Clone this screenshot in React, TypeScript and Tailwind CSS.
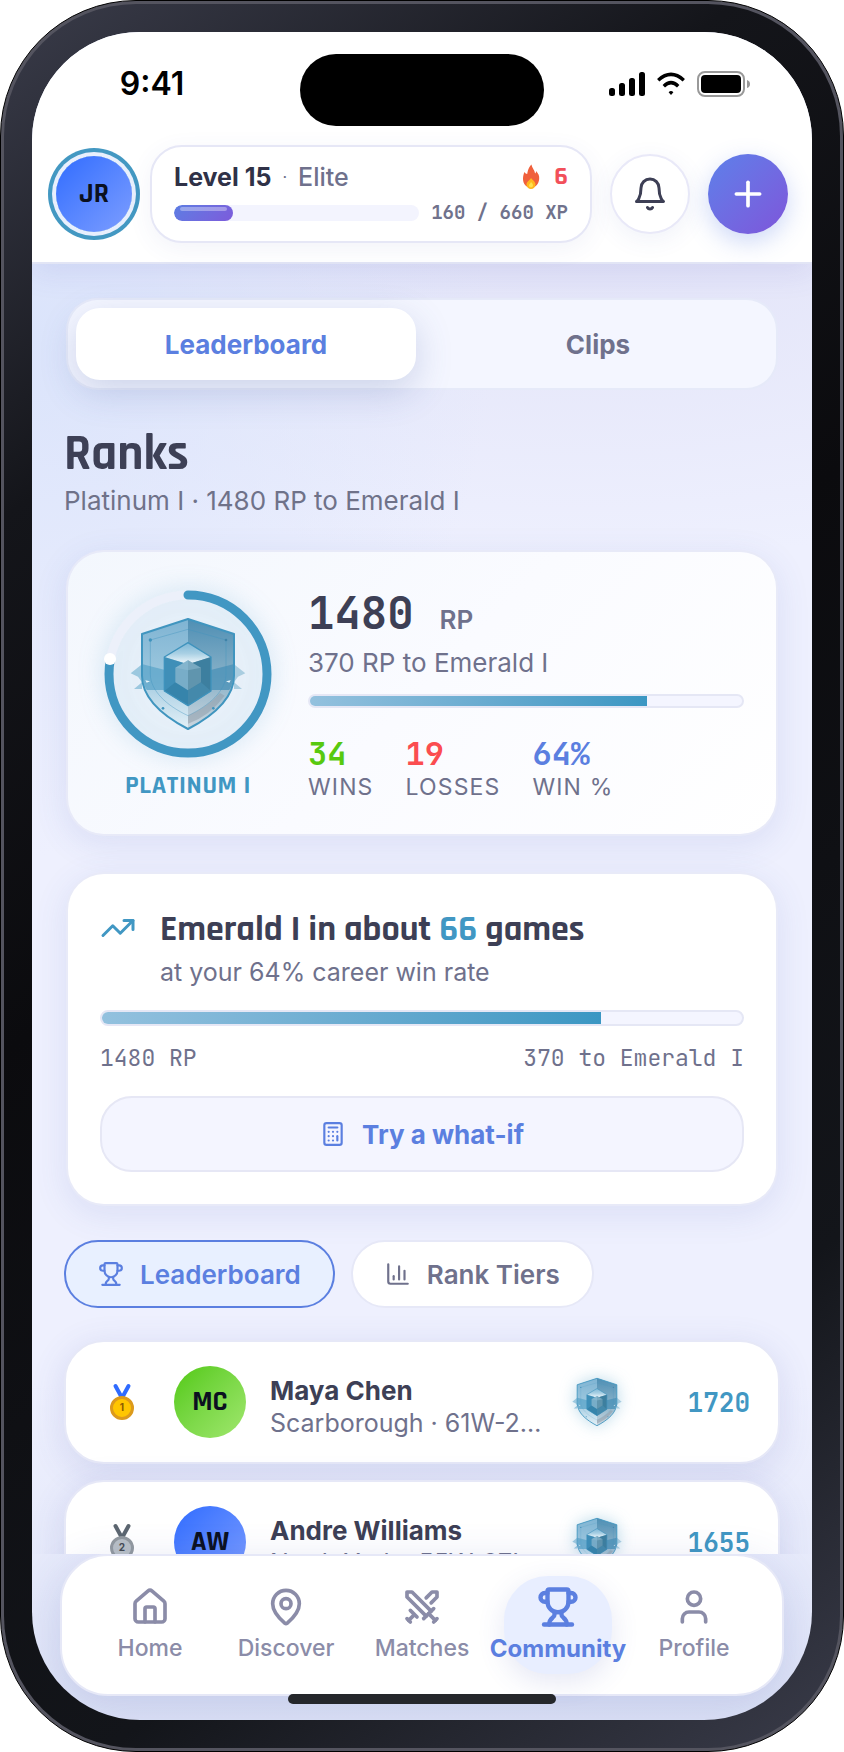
import { useId } from "react";
import {
  Calculator,
  ChartColumn,
  House,
  MapPin,
  Plus,
  Swords,
  TrendingUp,
  Trophy,
  User,
} from "lucide-react";

const DISPLAY = "font-['Rajdhani','Roboto',sans-serif]";
const MONO = "font-['JetBrains_Mono','DejaVu_Sans_Mono',monospace]";
const CARD =
  "mx-1 rounded-[36px] p-8 shadow-[0_0_0_2px_#e8eaf8,0_8px_32px_4px_rgba(70,85,175,0.10)]";

function Shield({ className }: { className: string }) {
  const id = useId();
  const left = `${id}l`;
  const right = `${id}r`;
  const top = `${id}t`;
  return (
    <svg viewBox="240 232 348 346" className={className} aria-hidden="true">
      <defs>
        <linearGradient id={left} x1="0" y1="0" x2="0" y2="1">
          <stop offset="0" stopColor="#7fb4d3" />
          <stop offset="0.5" stopColor="#9cc7de" />
          <stop offset="1" stopColor="#e3f0f7" />
        </linearGradient>
        <linearGradient id={right} x1="0" y1="0" x2="0" y2="1">
          <stop offset="0" stopColor="#4f8fb4" />
          <stop offset="0.5" stopColor="#84afc7" />
          <stop offset="1" stopColor="#ccd6de" />
        </linearGradient>
        <linearGradient id={top} x1="0" y1="0" x2="0" y2="1">
          <stop offset="0" stopColor="#7db7d6" />
          <stop offset="0.5" stopColor="#a9d0e4" />
          <stop offset="1" stopColor="#f4fafd" />
        </linearGradient>
      </defs>
      <path d="M242 403 276 376V450H252L276 430 264 413Z" fill="#9cc8df" />
      <path d="M586 403 552 376V450H576L552 430 564 413Z" fill="#a9cde0" />
      <path d="M414 240 276 285V410C276 480 338 530 414 570Z" fill={`url(#${left})`} />
      <path d="M414 240 552 285V410C552 480 490 530 414 570Z" fill={`url(#${right})`} />
      <path d="M278 376 345 393V453H290Q278 432 278 410Z" fill="#5fa6ca" opacity="0.8" />
      <path d="M550 376 482 393V453H538Q550 432 550 410Z" fill="#4c92b8" opacity="0.8" />
      <path
        d="M414 271 301 303V405C301 455 350 500 414 530 478 500 528 455 528 405V303Z"
        fill="none"
        stroke="#3f93bd"
        strokeWidth="2"
        opacity="0.6"
      />
      <path d="M414 530Q470 506 510 462L524 470Q480 530 414 554Z" fill="#8d9aa5" opacity="0.5" />
      <path d="M286 424 300 427 290 431ZM542 424 528 427 538 431Z" fill="#eaf5fa" />
      <circle cx="301" cy="303" r="5" fill="#3f93bd" />
      <circle cx="528" cy="303" r="4" fill="#3f83a8" />
      <circle cx="339" cy="508" r="4" fill="#3f93bd" />
      <circle cx="490" cy="508" r="4" fill="#3f93bd" />
      <path
        d="M414 240 552 285V410C552 480 490 530 414 570 338 530 276 480 276 410V285Z"
        fill="none"
        stroke="#4095bf"
        strokeWidth="6"
        strokeLinejoin="round"
      />
      <path d="M414 311 343 354 414 376 483 354Z" fill={`url(#${top})`} />
      <path d="M343 354 414 376V500L343 456Z" fill="#3f8fb8" />
      <path d="M483 354 414 376V500L483 456Z" fill="#3d7f9f" />
      <path d="M343 456 376 430 414 454V500Z" fill="#3684ab" />
      <path d="M483 456 453 430 414 454V500Z" fill="#4489ab" />
      <path d="M414 364 376 386V430L414 454Z" fill="#78adc8" />
      <path d="M414 364 453 386V430L414 454Z" fill="#6095ae" />
      <path d="M414 364 376 386 414 394 453 386Z" fill="#8fbdd3" opacity="0.5" />
      <path
        d="M414 311 483 354V456L414 500 343 456V354Z"
        fill="none"
        stroke="#3f93bd"
        strokeWidth="4"
        strokeLinejoin="round"
      />
    </svg>
  );
}

function BellIcon() {
  return (
    <svg
      viewBox="0 0 24 24"
      className="size-9"
      fill="none"
      stroke="currentColor"
      strokeWidth="2"
      strokeLinecap="round"
      strokeLinejoin="round"
      aria-hidden="true"
    >
      <path d="M6 8a6 6 0 0 1 12 0c0 7 3 9 3 9H3s3-2 3-9" />
      <path d="M10.300 21a1.940 1.940 0 0 0 3.400 0" />
    </svg>
  );
}

function Flame() {
  return (
    <svg viewBox="0 0 18 26" className="h-[26px] w-[18px]" aria-hidden="true">
      <path
        d="M9.500 0.500C10 4 13 6.500 13 9.500 14 9 14 8 14 7 16.500 9.500 17.500 12 17.200 15 16.800 20 13.500 23.500 9 23.500S1 20 1 15C1 12 1.600 10 2.500 8 3.200 9 4 10 5.200 10 6 6 6.500 3.500 9.500 0.500Z"
        fill="#f0603c"
      />
      <path
        d="M9 14C10 15.500 13.500 17.500 13.500 20.500 13.500 23 11.500 25 9 25S4.500 23 4.500 20.500C4.500 17.500 8 16 9 14Z"
        fill="#ffb61e"
      />
      <path d="M9 18C10 19 11 20 11 21.500A2 2 0 0 1 7 21.500C7 20 8.500 19.500 9 18Z" fill="#ffe14d" />
    </svg>
  );
}

function Medal({ place }: { place: number }) {
  const gold = place === 1;
  return (
    <svg viewBox="0 0 28 40" className="h-10 w-7" role="img" aria-label={`Place ${place}`}>
      <path
        d="M7.500 4 13.500 15M20.500 4 14.500 15"
        stroke={gold ? "#2f6bff" : "#5c6670"}
        strokeWidth="4"
        strokeLinecap="round"
      />
      <circle
        cx="14"
        cy="26"
        r="10.500"
        fill={gold ? "#ffc600" : "#b9c0c6"}
        stroke={gold ? "#dc9a1c" : "#92999f"}
        strokeWidth="3"
      />
      <text
        x="14"
        y="29"
        textAnchor="middle"
        fontSize="10"
        fontWeight="700"
        fill={gold ? "#8a5a00" : "#444b52"}
      >
        {place}
      </text>
    </svg>
  );
}

function StatusBar() {
  return (
    <div className="grid grid-cols-[1fr_244px_1fr] items-center pt-[22px]">
      <div className="pr-7 pb-3 text-center text-[32px] leading-10 font-semibold text-black">9:41</div>
      <div className="h-[72px] rounded-full bg-black" />
      <div className="flex items-center justify-center gap-3 pb-3 pl-1">
        <svg viewBox="0 0 36 24" className="h-6 w-9" aria-hidden="true">
          <rect x="0" y="16" width="6" height="8" rx="2.500" />
          <rect x="10" y="11" width="6" height="13" rx="2.500" />
          <rect x="20" y="6" width="6" height="18" rx="2.500" />
          <rect x="30" y="0" width="6" height="24" rx="2.500" />
        </svg>
        <svg viewBox="0 0 28 24" className="h-6 w-7" fill="none" stroke="#000" strokeWidth="3.400" aria-hidden="true">
          <path d="M1.200 8.200Q14-3.500 26.800 8.200" />
          <path d="M6.800 14.200Q14 7 21.200 14.200" />
          <path d="M11.600 20.200Q14 17.800 16.400 20.200L14 23Z" fill="#000" stroke="none" />
        </svg>
        <svg viewBox="0 0 54 26" className="h-[26px] w-[54px]" aria-hidden="true">
          <rect x="1" y="1" width="46" height="24" rx="7" fill="none" stroke="#999" strokeWidth="2" />
          <rect x="4" y="4" width="40" height="18" rx="4" />
          <path d="M50 9Q53 10 53 13T50 17Z" fill="#999" />
        </svg>
      </div>
    </div>
  );
}

function Header() {
  return (
    <header className="relative z-10 border-b-2 border-[#e2e5f5] bg-white shadow-[0_8px_28px_rgba(90,90,190,0.12)]">
      <StatusBar />
      <div className="flex items-center gap-[18px] px-6 py-[19px]">
        <button
          className={`flex size-[76px] shrink-0 items-center justify-center rounded-full bg-linear-135 from-[#2f6bff] to-[#7d9dff] text-[28px] font-bold text-[#0b1020] shadow-[0_0_0_4px_#e8effd,0_0_0_8px_#4398c2] ${DISPLAY}`}
        >
          JR
        </button>
        <div className="flex h-[98px] min-w-0 flex-1 flex-col justify-center gap-1.5 rounded-[32px] border-2 border-[#e6e7f6] bg-white px-[22px] shadow-[0_6px_24px_rgba(70,85,175,0.07)]">
          <div className="flex items-center justify-between">
            <div className="flex items-center gap-[11px] text-[25px] leading-8">
              <span className="font-bold text-[#2f3147]">Level 15</span>
              <span className="text-base text-[#6b6e88]">·</span>
              <span className="font-medium text-[#6f718c]">Elite</span>
            </div>
            <div className={`flex items-center gap-3.5 text-[26px] leading-8 font-bold text-[#f2505a] ${DISPLAY}`}>
              <Flame />6
            </div>
          </div>
          <div className="flex items-center gap-3">
            <div className="h-4 flex-1 overflow-hidden rounded-full bg-[#f3f4fe]">
              <div className="h-full w-[24%] rounded-full bg-linear-135 from-[#5b7de3] to-[#7c5bdb] px-1.5 pt-0.5">
                <div className="h-1 rounded-full bg-white/35" />
              </div>
            </div>
            <span className={`text-[19px] leading-7 font-semibold text-[#70728c] ${MONO}`}>160 / 660 XP</span>
          </div>
        </div>
        <button
          aria-label="Notifications"
          className="flex size-20 shrink-0 items-center justify-center rounded-full border-2 border-[#e9e9f8] bg-white text-[#3d3f55] shadow-[0_6px_24px_rgba(70,85,175,0.08)]"
        >
          <BellIcon />
        </button>
        <button
          aria-label="Add"
          className="flex size-20 shrink-0 items-center justify-center rounded-full bg-linear-135 from-[#5b80ea] to-[#7d55da] text-white shadow-[0_8px_24px_rgba(91,125,227,0.30)]"
        >
          <Plus className="size-10" strokeWidth={2.2} />
        </button>
      </div>
    </header>
  );
}

function ProgressBar({ height }: { height: string }) {
  return (
    <div className={`${height} overflow-hidden rounded-full border-2 border-[#e5e7f5] bg-[#f4f5ff]`}>
      <div className="h-full w-[78%] bg-linear-to-r from-[#93c1de] to-[#3b97c3]" />
    </div>
  );
}

function RankRing() {
  const length = 2 * Math.PI * 79;
  return (
    <svg viewBox="0 0 176 180" className="h-[180px] w-[176px] overflow-visible drop-shadow-[0_0_12px_rgba(67,152,194,0.25)]" aria-hidden="true">
      <circle cx="88" cy="90" r="79" fill="#e9f1fa" fillOpacity="0.4" stroke="#ecf0fa" strokeWidth="9" />
      <circle
        cx="88"
        cy="90"
        r="79"
        fill="none"
        stroke="#4197c3"
        strokeWidth="9"
        strokeLinecap="round"
        strokeDasharray={`${length * 0.78} ${length}`}
        transform="rotate(-90 88 90)"
      />
      <circle cx="10" cy="75" r="6" fill="#fff" />
    </svg>
  );
}

const stats = [
  { value: "34", label: "WINS", color: "text-[#58c90f]" },
  { value: "19", label: "LOSSES", color: "text-[#fb4d50]" },
  { value: "64%", label: "WIN %", color: "text-[#5b7fe0]" },
];

function RankCard() {
  return (
    <section
      className={`${CARD} flex gap-8 bg-[linear-gradient(135deg,#f3f7fd_0%,#fafbff_50%,#ffffff_100%)]`}
    >
      <div className="flex flex-col items-center justify-between">
        <div className="grid place-items-center [&>*]:[grid-area:1/1]">
          <RankRing />
          <Shield className="relative h-[116px] w-[116px]" />
        </div>
        <div className={`text-[26px] leading-8 font-bold tracking-wide text-[#4197c3] ${DISPLAY}`}>PLATINUM I</div>
      </div>
      <div className="min-w-0 flex-1">
        <div className="flex h-[58px] items-baseline gap-[26px] leading-[58px]">
          <span className={`text-[44px] font-bold text-[#3d3f55] ${MONO}`}>1480</span>
          <span className="text-[26px] leading-8 font-semibold text-[#6f718c]">RP</span>
        </div>
        <p className="mb-2.5 text-[26px] leading-[42px] text-[#6f718c]">370 RP to Emerald I</p>
        <ProgressBar height="h-3.5" />
        <dl className="mt-7 flex gap-8">
          {stats.map((s) => (
            <div key={s.label} className="flex flex-col-reverse">
              <dt className="text-[23px] leading-[30px] tracking-wider text-[#6f718c]">{s.label}</dt>
              <dd className={`text-[32px] leading-9 font-bold ${MONO} ${s.color}`}>{s.value}</dd>
            </div>
          ))}
        </dl>
      </div>
    </section>
  );
}

function ForecastCard() {
  return (
    <section className={`${CARD} mt-10 bg-white`}>
      <div className="flex gap-6">
        <TrendingUp className="mt-1 size-9 shrink-0 text-[#4197c3]" strokeWidth={2} />
        <div>
          <h2 className={`text-[36px] leading-[48px] font-bold text-[#3d3f55] ${DISPLAY}`}>
            Emerald I in about <span className="text-[#4197c3]">66</span> games
          </h2>
          <p className="mb-5 text-[25px] leading-9 text-[#6f718c]">at your 64% career win rate</p>
        </div>
      </div>
      <ProgressBar height="h-4" />
      <div className={`mt-4 flex justify-between text-[23px] leading-8 text-[#6f718c] ${MONO}`}>
        <span>1480 RP</span>
        <span>370 to Emerald I</span>
      </div>
      <button className="mt-[22px] flex h-[76px] w-full items-center justify-center gap-4 rounded-[32px] border-2 border-[#e6e7f5] bg-[#f4f5ff] text-[26px] font-bold text-[#5b7fe0]">
        <Calculator className="size-[26px]" />
        Try a what-if
      </button>
    </section>
  );
}

const players = [
  { place: 1, initials: "MC", name: "Maya Chen", detail: "Scarborough · 61W-27L", rp: 1720, avatar: "from-[#51c904] to-[#a0e76c]" },
  { place: 2, initials: "AW", name: "Andre Williams", detail: "North York · 55W-27L", rp: 1655, avatar: "from-[#2f6bff] to-[#7d9dff]" },
];

function Leaderboard() {
  return (
    <ol className="mt-8 flex flex-col gap-4">
      {players.map((p) => (
        <li
          key={p.place}
          className="flex h-[124px] items-center gap-6 rounded-[40px] border-2 border-[#e6e8f7] bg-white px-7 shadow-[0_8px_32px_4px_rgba(70,85,175,0.12)]"
        >
          <div className="flex w-14 shrink-0 justify-center">
            <Medal place={p.place} />
          </div>
          <div
            className={`flex size-[72px] shrink-0 items-center justify-center rounded-full bg-linear-135 text-[28px] font-bold text-[#0b1020] ${DISPLAY} ${p.avatar}`}
          >
            {p.initials}
          </div>
          <div className="min-w-0 flex-1 pt-2.5 leading-8">
            <div className="truncate text-[26px] font-bold text-[#3d3f55]">{p.name}</div>
            <div className="truncate text-[25px] text-[#6f718c]">{p.detail}</div>
          </div>
          <Shield className="mr-1.5 ml-1 h-[50px] w-[50px] shrink-0 drop-shadow-[0_0_8px_rgba(67,152,194,0.35)]" />
          <div className={`w-[98px] shrink-0 text-right text-[26px] font-bold text-[#4197c3] ${MONO}`}>{p.rp}</div>
        </li>
      ))}
    </ol>
  );
}

const tabs = [
  { label: "Home", Icon: House, active: false },
  { label: "Discover", Icon: MapPin, active: false },
  { label: "Matches", Icon: Swords, active: false },
  { label: "Community", Icon: Trophy, active: true },
  { label: "Profile", Icon: User, active: false },
];

function BottomNav() {
  return (
    <nav className="relative mx-7 mb-6 grid h-[142px] shrink-0 grid-cols-5 rounded-[48px] border-2 border-[#e6e8f7] bg-white px-5 shadow-[0_12px_40px_4px_rgba(70,85,175,0.16)]">
      {tabs.map(({ label, Icon, active }) => (
        <button
          key={label}
          aria-current={active ? "page" : undefined}
          className={`relative flex flex-col items-center justify-center gap-1.5 leading-[30px] ${
            active ? "text-[24px] font-bold text-[#5b7fe0]" : "text-[23px] font-medium text-[#8b8ca8]"
          }`}
        >
          {active && (
            <span className="absolute top-1/2 left-1/2 h-[98px] w-[108px] -translate-x-1/2 -translate-y-1/2 rounded-[44px] bg-[#e8eeff] shadow-[0_8px_28px_rgba(70,85,175,0.14)]" />
          )}
          <Icon className={`relative ${active ? "size-[42px]" : "size-10"}`} strokeWidth={active ? 2.5 : 2.2} />
          <span className="relative">{label}</span>
        </button>
      ))}
    </nav>
  );
}

export default function App() {
  return (
    <div className="h-screen w-full overflow-hidden bg-white font-['Inter',sans-serif]">
      <div className="h-full rounded-[136px] border border-black bg-[#54545f] p-[3px]">
        <div className="h-full rounded-[132px] bg-[linear-gradient(145deg,#3a3c4a_0%,#14151a_22%,#0b0b0e_45%,#13151a_78%,#3a3c4a_100%)] p-7">
          <div className="relative flex h-full flex-col overflow-hidden rounded-[108px] bg-[radial-gradient(ellipse_460px_520px_at_0%_18%,#dbe4fb_0%,transparent_100%),radial-gradient(ellipse_800px_360px_at_70%_10%,#e1e2f7_0%,transparent_100%),linear-gradient(to_bottom,#eef0fe_0%,#eef0fe_80%,#dfe4f7_100%)]">
            <Header />
            <main className="min-h-0 flex-1 overflow-y-auto px-8 pt-9 [scrollbar-width:none]">
              <div className="mx-1 flex gap-3 rounded-[30px] bg-[#f4f6ff] p-2 shadow-[0_0_0_2px_#e6eaf9]">
                <button className="h-[72px] flex-1 rounded-[24px] bg-white text-[26px] font-bold text-[#5b7fe0] shadow-[0_12px_36px_rgba(70,90,160,0.22)]">
                  Leaderboard
                </button>
                <button className="h-[72px] flex-1 rounded-[24px] text-[26px] font-bold text-[#6f718c]">
                  Clips
                </button>
              </div>
              <h1 className={`mt-10 text-[50px] leading-[52px] font-bold text-[#3d4056] ${DISPLAY}`}>Ranks</h1>
              <p className="mb-[30px] text-[26px] leading-[42px] text-[#6f7289]">Platinum I · 1480 RP to Emerald I</p>
              <RankCard />
              <ForecastCard />
              <div className="mt-9 flex gap-4 text-[26px] font-semibold">
                <button className="flex h-[68px] items-center gap-4 rounded-full border-2 border-[#5b7fe0] bg-[#e8f0ff] px-8 text-[#5b7fe0]">
                  <Trophy className="size-[26px]" />
                  Leaderboard
                </button>
                <button className="flex h-[68px] items-center gap-4 rounded-full border-2 border-[#e6e8f7] bg-white px-8 text-[#6f718c]">
                  <ChartColumn className="size-[26px]" />
                  Rank Tiers
                </button>
              </div>
              <Leaderboard />
            </main>
            <BottomNav />
            <div className="absolute bottom-4 left-1/2 h-2.5 w-[268px] -translate-x-1/2 rounded-full bg-[#25272b]" />
          </div>
        </div>
      </div>
    </div>
  );
}
